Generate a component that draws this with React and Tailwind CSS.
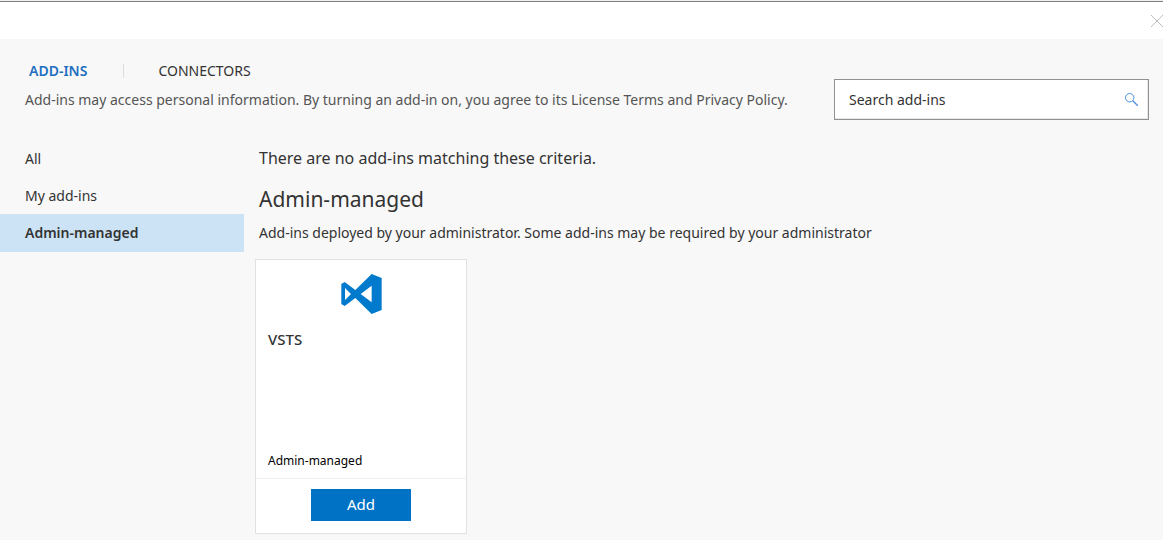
import React from "react";

const categories = [
  { label: "All" },
  { label: "My add-ins" },
  { label: "Admin-managed", current: true },
];

function VstsLogo() {
  return (
    <svg viewBox="0 0 121 120" className="mt-3.5 ml-[85px] h-10 w-[41px] fill-[#007acc]" aria-hidden="true">
      <path
        fillRule="evenodd"
        d="M0 30 L10 24 L42 48 L91 0 L121 12 L121 108 L91 120 L42 72 L10 96 L0 90 Z M11 42 V78 L29 60 Z M58 60 L91 85 V35 Z"
      />
    </svg>
  );
}

function TitleBar() {
  return (
    <div className="flex h-[39px] items-center justify-end border-t border-[#f0f0f0] bg-white">
      <div className="flex h-full w-full items-center justify-end overflow-hidden border-t border-[#808080]">
        <button type="button" aria-label="Close" className="block">
          <svg viewBox="0 0 12 12" className="h-3 w-3" fill="none" stroke="#bdbdbd" strokeWidth="1">
            <path d="M0 0 L12 12 M12 0 L0 12" />
          </svg>
        </button>
      </div>
    </div>
  );
}

function SearchBox() {
  return (
    <div className="mt-4 flex h-[41px] w-[315px] shrink-0 items-center border border-[#919191] bg-white pr-2.5 pl-3.5 shadow-[inset_-1px_-1px_0_#e8e8e8]">
      <input
        type="text"
        aria-label="Search add-ins"
        placeholder="Search add-ins"
        className="min-w-0 flex-1 bg-transparent text-sm text-[#333] outline-none placeholder:text-[#333]"
      />
      <button type="button" aria-label="Search">
        <svg viewBox="0 0 13 13" className="h-[13px] w-[13px]" fill="none" stroke="#4a8fe0" strokeWidth="1">
          <circle cx="4.7" cy="4.7" r="4.2" />
          <path d="M7.8 7.8 L12.8 12.8" strokeWidth="1.3" />
        </svg>
      </button>
    </div>
  );
}

export default function App() {
  return (
    <div className="flex min-h-screen flex-col bg-[#f8f8f8] font-['Noto_Sans','Open_Sans',sans-serif] text-sm text-[#333]">
      <TitleBar />
      <header className="flex items-start justify-between pt-6 pr-3.5 pl-[25px]">
        <div>
          <nav className="flex h-4 items-center pl-1">
            <a href="#add-ins" className="pr-9 font-semibold text-[#1f6fc0]">ADD-INS</a>
            <span className="h-3.5 w-px bg-[#dcdcdc]" />
            <a href="#connectors" className="pl-[34px]">CONNECTORS</a>
          </nav>
          <p className="mt-[11px] text-[#555]">
            Add-ins may access personal information. By turning an add-in on, you agree to its License Terms and Privacy Policy.
          </p>
        </div>
        <SearchBox />
      </header>

      <div className="mt-5 flex flex-1 items-start">
        <nav className="w-[244px] shrink-0">
          <ul>
            {categories.map((c) => (
              <li key={c.label}>
                <a
                  href="#list"
                  className={
                    c.current
                      ? "flex h-[38px] items-center bg-[#cce3f5] pl-[25px] font-semibold"
                      : "flex h-[37px] items-center pl-[25px]"
                  }
                >
                  {c.label}
                </a>
              </li>
            ))}
          </ul>
        </nav>
        <main className="flex-1 pb-1.5 pl-[11px]">
          <div className="pl-1">
            <p className="pt-1.5 text-base leading-6">There are no add-ins matching these criteria.</p>
            <h1 className="mt-[13px] text-[21px] leading-8">Admin-managed</h1>
            <p className="mt-2 leading-5">
              Add-ins deployed by your administrator. Some add-ins may be required by your administrator
            </p>
          </div>
          <article className="mt-4 flex h-[275px] w-[212px] flex-col border border-[#e2e2e2] bg-white">
            <VstsLogo />
            <h2 className="mt-[15px] px-3 text-[15px] leading-5 font-medium">VSTS</h2>
            <p className="mt-auto px-3 pb-[7px] text-xs leading-5 text-black">Admin-managed</p>
            <div className="flex h-[55px] items-start justify-center border-t border-[#f1f1f1] pt-2.5">
              <button type="button" className="h-8 w-[100px] bg-[#0072c6] text-[15px] text-white">Add</button>
            </div>
          </article>
        </main>
      </div>
    </div>
  );
}
